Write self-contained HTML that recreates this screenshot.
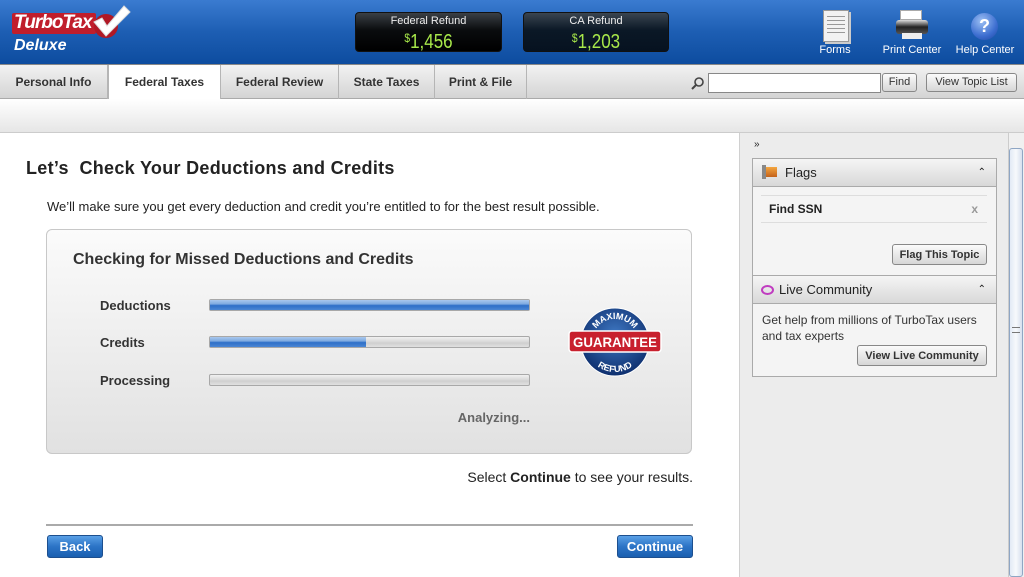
<!DOCTYPE html>
<html><head><meta charset="utf-8"><style>
*{margin:0;padding:0;box-sizing:border-box}
body{width:1024px;height:577px;overflow:hidden;font-family:"Liberation Sans",Arial,sans-serif;background:#fff;position:relative}
.a{position:absolute}
#hdr{left:0;top:0;width:1024px;height:64px;background:linear-gradient(180deg,#3a7bd0 0%,#1d5eb3 50%,#0d4c9f 100%)}
.refund{background:linear-gradient(180deg,#3a3f45 0%,#0a0c0e 45%,#000 100%);border-radius:4px;border:1px solid #111;color:#fff;text-align:center}
.refund .l{font-size:11px;margin-top:2px;color:#eee}
.refund .v{font-size:20px;color:#a8e84a;line-height:22px;transform:scaleX(0.85)}
.refund .v sup{font-size:12px;vertical-align:6px}
.hi{color:#fff;font-size:11px;text-align:center}
#tabs{left:0;top:64px;width:1024px;height:35px;border-top:1px solid #888;background:linear-gradient(180deg,#f2f2f2,#d4d4d4);border-bottom:1px solid #aaa}
.tab{position:absolute;top:0;height:34px;line-height:34px;font-size:12px;font-weight:bold;color:#333;text-align:center;border-right:1px solid #b5b5b5}
#sub{left:0;top:99px;width:1024px;height:34px;background:linear-gradient(180deg,#fff,#e6e6e6);border-bottom:1px solid #ccc}
.btn{position:absolute;border:1px solid #888;border-radius:3px;background:linear-gradient(180deg,#fbfbfb,#d6d6d6);font-size:11px;color:#333;text-align:center;font-weight:bold}
.bar{position:absolute;left:209px;width:321px;height:12px;border:1px solid #a8a8a8;border-radius:2px;background:linear-gradient(180deg,#f0f0f0,#d8d8d8 50%,#cfcfcf 60%,#e0e0e0)}
.bar i{display:block;height:100%;background:linear-gradient(180deg,#a9c8ee,#7eaae0 40%,#2d6fc8 55%,#4b86d4)}
.lbl{position:absolute;left:100px;font-size:13px;font-weight:bold;color:#333}
.bb{position:absolute;height:23px;border:1px solid #1d4f8e;border-radius:3px;background:linear-gradient(180deg,#5aa0e6,#2c74c6 50%,#1a5fb0);color:#fff;font-size:13px;font-weight:bold;text-align:center;line-height:21px}
.ph{position:absolute;left:753px;width:243px;height:28px;background:linear-gradient(180deg,#f5f5f5,#d8d8d8);border-bottom:1px solid #aaa;font-size:13px;color:#222;line-height:28px}
</style></head><body>
<div id="hdr" class="a">
 <div class="a" style="left:12px;top:13px;width:84px;height:21px;background:#c01e2c;border-radius:2px"></div>
 <div class="a" style="left:14px;top:12px;font-size:19px;font-weight:bold;font-style:italic;color:#fff;letter-spacing:-1px">TurboTax</div>
 <svg class="a" style="left:86px;top:4px" width="46" height="36" viewBox="0 0 46 36"><circle cx="20" cy="22" r="12" fill="#b01825"/><path d="M8 18 L16 14 L21 22 L38 2 L44 8 L20 32 Z" fill="#fff" stroke="#ddd" stroke-width="1"/></svg>
 <div class="a" style="left:14px;top:37px;font-size:16px;font-style:italic;font-weight:bold;color:#fff">Deluxe</div>
 <div class="a refund" style="left:355px;top:12px;width:147px;height:40px"><div class="l">Federal Refund</div><div class="v"><sup>$</sup>1,456</div></div>
 <div class="a refund" style="left:523px;top:12px;width:146px;height:40px;background:linear-gradient(180deg,#3a4550 0%,#0b1826 45%,#061220 100%)"><div class="l">CA Refund</div><div class="v"><sup>$</sup>1,203</div></div>
 <div class="a" style="left:823px;top:10px;width:26px;height:32px;background:#f2f2f2;border:1px solid #999;box-shadow:2px 2px 0 #ccc"></div>
 <div class="a" style="left:827px;top:16px;width:18px;height:20px;background:repeating-linear-gradient(180deg,#999 0 1px,transparent 1px 4px)"></div>
 <div class="a hi" style="left:812px;top:44px;width:46px">Forms</div>
 <div class="a" style="left:900px;top:10px;width:22px;height:10px;background:#fff;border:1px solid #aaa"></div>
 <div class="a" style="left:896px;top:20px;width:32px;height:14px;background:linear-gradient(#ddd,#222 50%,#555);border-radius:3px"></div>
 <div class="a" style="left:902px;top:33px;width:20px;height:6px;background:#eee"></div>
 <div class="a hi" style="left:878px;top:44px;width:68px">Print Center</div>
 <div class="a" style="left:971px;top:13px;width:27px;height:27px;border-radius:50%;background:radial-gradient(circle at 40% 30%,#9cc0f4,#3d6ed0 60%,#1d45a0);color:#fff;font-weight:bold;font-size:18px;text-align:center;line-height:27px">?</div>
 <div class="a hi" style="left:952px;top:44px;width:66px">Help Center</div>
</div>
<div id="tabs" class="a">
 <div class="tab" style="left:0;width:108px">Personal Info</div>
 <div class="tab" style="left:108px;width:113px;background:#fff;height:35px;border-left:1px solid #b5b5b5">Federal Taxes</div>
 <div class="tab" style="left:221px;width:118px">Federal Review</div>
 <div class="tab" style="left:339px;width:96px">State Taxes</div>
 <div class="tab" style="left:435px;width:92px">Print &amp; File</div>
 <svg class="a" style="left:691px;top:11px" width="14" height="14"><circle cx="8" cy="6" r="4" fill="none" stroke="#444" stroke-width="1.6"/><path d="M5 9 L1 13" stroke="#444" stroke-width="2"/></svg>
 <div class="a" style="left:708px;top:8px;width:173px;height:20px;background:#fff;border:1px solid #888"></div>
 <div class="btn" style="left:882px;top:8px;width:35px;height:19px;line-height:17px;font-weight:normal">Find</div>
 <div class="btn" style="left:926px;top:8px;width:91px;height:19px;line-height:17px;font-weight:normal">View Topic List</div>
</div>
<div id="sub" class="a"></div>
<div class="a" style="left:739px;top:133px;width:269px;height:444px;background:#ececec;border-left:1px solid #d0d0d0"></div>
<div class="a" style="left:1008px;top:133px;width:16px;height:444px;background:#f0f0f0;border-left:1px solid #ccc"></div>
<div class="a" style="left:1009px;top:148px;width:14px;height:429px;background:linear-gradient(90deg,#e2eaf5,#f7f9fc,#d6e0ee);border:1px solid #8fa6c4;border-radius:3px"></div>
<div class="a" style="left:1012px;top:327px;width:8px;height:6px;border-top:1px solid #777;border-bottom:1px solid #777"></div>
<div class="a" style="left:26px;top:158px;font-size:18px;font-weight:bold;color:#222;letter-spacing:0.3px">Let’s&nbsp; Check Your Deductions and Credits</div>
<div class="a" style="left:47px;top:199px;font-size:13px;color:#222">We’ll make sure you get every deduction and credit you’re entitled to for the best result possible.</div>
<div class="a" style="left:46px;top:229px;width:646px;height:225px;border:1px solid #c8c8c8;border-radius:6px;background:linear-gradient(180deg,#fbfbfb,#e1e1e1)"></div>
<div class="a" style="left:73px;top:251px;font-size:16px;font-weight:bold;color:#333">Checking for Missed Deductions and Credits</div>
<div class="lbl" style="top:298px">Deductions</div><div class="bar" style="top:299px"><i style="width:100%"></i></div>
<div class="lbl" style="top:335px">Credits</div><div class="bar" style="top:336px"><i style="width:49%"></i></div>
<div class="lbl" style="top:373px">Processing</div><div class="bar" style="top:374px"></div>
<svg class="a" style="left:565px;top:305px" width="100" height="74" viewBox="0 0 100 74">
 <defs><radialGradient id="g" cx="50%" cy="40%" r="60%"><stop offset="0" stop-color="#3f79c4"/><stop offset="1" stop-color="#0e2f6e"/></radialGradient>
 <path id="t" d="M27 37 A23 23 0 0 1 73 37"/><path id="b" d="M20 37 A30 30 0 0 0 80 37"/></defs>
 <circle cx="50" cy="37" r="34" fill="url(#g)" stroke="#fff" stroke-width="1"/>
 <text font-family="Liberation Sans" font-weight="bold" font-size="9" fill="#fff" text-anchor="middle"><textPath href="#t" startOffset="50%">MAXIMUM</textPath></text>
 <text font-family="Liberation Sans" font-weight="bold" font-size="9" fill="#fff" text-anchor="middle"><textPath href="#b" startOffset="50%">REFUND</textPath></text>
 <rect x="4" y="26" width="92" height="21" rx="3" fill="#c8202e" stroke="#fff" stroke-width="1.5"/>
 <text x="50" y="42" font-family="Liberation Sans" font-weight="bold" font-size="14" fill="#fff" text-anchor="middle" textLength="84" lengthAdjust="spacingAndGlyphs">GUARANTEE</text>
</svg>
<div class="a" style="left:420px;top:410px;width:110px;text-align:right;font-size:13px;font-weight:bold;color:#666">Analyzing...</div>
<div class="a" style="left:300px;top:469px;width:393px;text-align:right;font-size:14px;color:#222">Select <b>Continue</b> to see your results.</div>
<div class="a" style="left:46px;top:524px;width:647px;height:2px;background:#aaa"></div>
<div class="bb" style="left:47px;top:535px;width:56px">Back</div>
<div class="bb" style="left:617px;top:535px;width:76px">Continue</div>
<div class="a" style="left:754px;top:139px;font-size:10px;color:#222">»</div>
<div class="a" style="left:752px;top:158px;width:245px;height:219px;border:1px solid #aaa;background:#f4f4f4"></div>
<div class="ph" style="top:159px"><span style="display:inline-block;width:4px;height:14px;background:#888;margin:0 0 -2px 9px"></span><span style="display:inline-block;width:11px;height:10px;background:linear-gradient(#f4a640,#c4621a);margin-right:8px"></span>Flags<span style="position:absolute;right:10px;font-size:10px">⌃</span></div>
<div class="a" style="left:761px;top:195px;width:226px;height:28px;border-top:1px solid #ddd;border-bottom:1px solid #ddd;font-size:12px;font-weight:bold;color:#222;line-height:26px;padding-left:8px">Find SSN<span style="position:absolute;right:9px;color:#999;font-weight:bold">x</span></div>
<div class="btn" style="left:892px;top:244px;width:95px;height:21px;line-height:20px">Flag This Topic</div>
<div class="a" style="left:753px;top:275px;width:243px;height:1px;background:#aaa"></div>
<div class="ph" style="top:276px"><span style="display:inline-block;width:13px;height:10px;border:2px solid #c03cc0;border-radius:50%;margin:0 5px -1px 8px"></span>Live Community<span style="position:absolute;right:10px;font-size:10px">⌃</span></div>
<div class="a" style="left:762px;top:312px;font-size:12px;color:#333;line-height:16px;width:230px">Get help from millions of TurboTax users and tax experts</div>
<div class="btn" style="left:857px;top:345px;width:130px;height:21px;line-height:20px">View Live Community</div>
</body></html>
